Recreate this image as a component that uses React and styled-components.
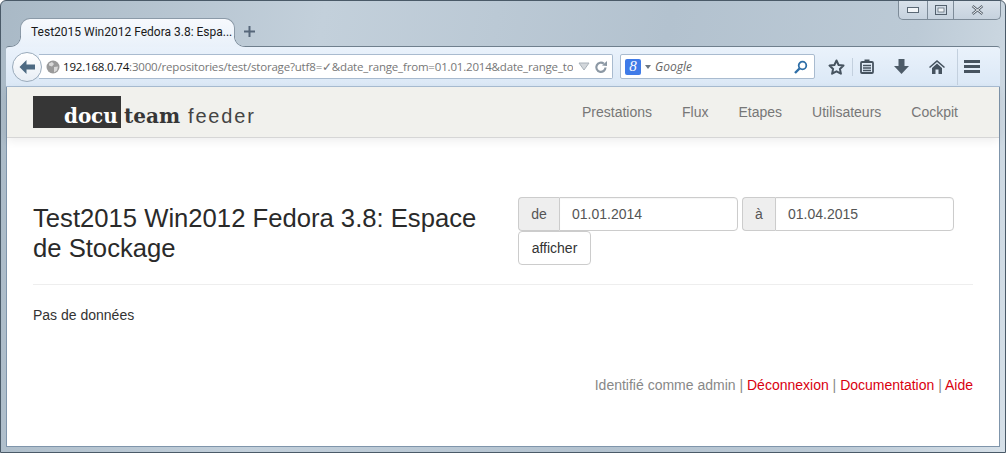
import React from "react";
import styled, { createGlobalStyle } from "styled-components";

const Global = createGlobalStyle`
  html, body { margin: 0; padding: 0; background: #fff; }
  body { font-family: "Liberation Sans", Arial, sans-serif; }
  * { box-sizing: border-box; }
`;

const Win = styled.div`
  position: relative;
  width: 1006px;
  height: 453px;
  overflow: hidden;
  padding: 1px 5px 5px 5px;
  display: flex;
  flex-direction: column;
  border: 1px solid #4a5a68;
  border-radius: 6px 6px 0 0;
  background: linear-gradient(100deg, #a9b9c6 0%, #c3d0db 30%, #b3c2cf 62%, #bccad6 85%, #d6e0e8 100%);
`;
const TabStrip = styled.div`
  height: 44px;
  display: flex;
  align-items: flex-end;
  padding-left: 14px;
  flex: none;
`;
const Tab = styled.div`
  position: relative;
  z-index: 1;
  width: 215px;
  height: 29px;
  margin-bottom: -1px;
  padding: 3px 0 0 10px;
  border: 1px solid #8b9aa8;
  border-bottom: none;
  border-radius: 10px 10px 0 0;
  background: linear-gradient(#f6f9fd, #e9f1fa);
  font: 12px/20px Roboto, sans-serif;
  color: #1a1a1a;
  white-space: nowrap;
  &::before,
  &::after {
    content: "";
    position: absolute;
    bottom: 0;
    width: 11px;
    height: 11px;
  }
  &::before {
    left: -11px;
    background: radial-gradient(circle at 0 0, transparent 10px, #7d8c9a 10.5px, #e9f1fa 11.5px);
  }
  &::after {
    right: -11px;
    background: radial-gradient(circle at 100% 0, transparent 10px, #7d8c9a 10.5px, #e9f1fa 11.5px);
  }
`;
const NewTab = styled.span`
  margin: 0 0 9px 9px;
  display: flex;
`;
const WinControls = styled.div`
  position: absolute;
  top: 0;
  right: 4px;
  width: 103px;
  height: 19px;
  display: grid;
  grid-template-columns: 28px 26px 1fr;
  border: 1px solid #7d8b98;
  border-top: none;
  border-radius: 0 0 5px 5px;
  background: linear-gradient(#d8e1ea, #c6d2de);
`;
const WinBtn = styled.div`
  display: flex;
  align-items: center;
  justify-content: center;
  border-left: ${(p) => (p.$first ? "none" : "1px solid #7d8b98")};
`;
const Toolbar = styled.div`
  height: 41px;
  flex: none;
  display: flex;
  align-items: center;
  padding: 0 0 0 6px;
  border-top: 1px solid #6f7f8d;
  border-radius: 3px 3px 0 0;
  background: linear-gradient(#eaf2fb, #dbe8f6);
  border-bottom: 1px solid #a9bdd3;
`;
const Back = styled.div`
  position: relative;
  z-index: 1;
  width: 30px;
  height: 30px;
  flex: none;
  border-radius: 50%;
  border: 1px solid #9aabbb;
  background: linear-gradient(#fff, #e8eef5);
  display: flex;
  align-items: center;
  justify-content: center;
`;
const UrlBar = styled.div`
  width: 574px;
  height: 25px;
  margin-left: -3px;
  padding: 0 4px 0 7px;
  display: flex;
  align-items: center;
  gap: 3px;
  border: 1px solid #a9bbcf;
  border-left: none;
  border-radius: 0 2px 2px 0;
  background: #fff;
`;
const UrlText = styled.div`
  flex: 1;
  min-width: 0;
  margin-right: 2px;
  overflow: hidden;
  white-space: nowrap;
  font: 11.5px/16px "Open Sans", sans-serif;
  letter-spacing: -0.18px;
  color: #777;
`;
const Host = styled.span`
  color: #111;
`;
const SearchBar = styled.div`
  width: 195px;
  height: 25px;
  margin-left: 7px;
  padding: 0 6px 0 4px;
  display: flex;
  align-items: center;
  border: 1px solid #a9bbcf;
  border-radius: 2px;
  background: #fff;
`;
const GBadge = styled.div`
  width: 16px;
  height: 16px;
  flex: none;
  border-radius: 2px;
  background: #3f7be8;
  color: #fff;
  font: italic 15px/15px "Liberation Serif", serif;
  text-align: center;
`;
const SearchText = styled.div`
  flex: 1;
  margin-left: 4px;
  font: italic 12px/16px "Open Sans", sans-serif;
  color: #666;
`;
const Tools = styled.div`
  display: flex;
  align-items: center;
  margin-left: 6px;
  flex: 1;
`;
const ToolIcon = styled.span`
  display: flex;
  width: ${(p) => p.$w}px;
  justify-content: center;
`;
const ToolSep = styled.span`
  width: 1px;
  height: ${(p) => p.$h}px;
  margin-left: ${(p) => p.$ml || 0}px;
  background: #c3d0de;
  flex: none;
`;
const Page = styled.div`
  flex: 1;
  min-height: 0;
  background: #fff;
  border: 1px solid #7f95ab;
  border-top: none;
`;
const NavBar = styled.div`
  height: 51px;
  padding: 0 41px 0 26px;
  display: flex;
  align-items: center;
  justify-content: space-between;
  background: #f1f1ed;
  border-bottom: 1px solid #d6d6d6;
  box-shadow: 0 3px 9px rgba(0, 0, 0, 0.07);
`;
const Logo = styled.div`
  display: flex;
  align-items: flex-start;
  height: 32px;
`;
const LogoBox = styled.div`
  width: 88px;
  height: 32px;
  padding: 6px 0 0 31px;
  background: #363636;
  color: #fff;
  font: bold 20px/28px "DejaVu Serif", serif;
  letter-spacing: -0.1px;
`;
const LogoTeam = styled.span`
  margin: 6px 0 0 3px;
  color: #363636;
  font: bold 20px/28px "DejaVu Serif", serif;
  letter-spacing: 0;
`;
const LogoFeeder = styled.span`
  margin: 6px 0 0 8px;
  color: #444;
  font: 20px/28px "Liberation Sans", sans-serif;
  letter-spacing: 1.8px;
`;
const Nav = styled.nav`
  display: flex;
  gap: 30px;
`;
const NavLink = styled.a`
  font-size: 14px;
  line-height: 20px;
  color: #777;
`;
const Main = styled.main`
  padding: 59px 26px 0;
`;
const Head = styled.div`
  display: grid;
  grid-template-columns: 485px 1fr;
  min-height: 87px;
  border-bottom: 1px solid #eee;
`;
const Title = styled.h1`
  margin: 6px 0 0;
  max-width: 455px;
  font-size: 25.65px;
  font-weight: 400;
  line-height: 30px;
  color: #2a2a2a;
`;
const Form = styled.form`
  display: flex;
  flex-wrap: wrap;
  width: 440px;
  column-gap: 4px;
  margin: 0;
  height: 87px;
  align-content: flex-start;
`;
const Group = styled.div`
  display: flex;
  width: ${(p) => p.$w}px;
  height: 34px;
  font-size: 14px;
`;
const Addon = styled.span`
  width: ${(p) => p.$w}px;
  flex: none;
  display: flex;
  align-items: center;
  justify-content: center;
  background: #eee;
  border: 1px solid #ccc;
  border-right: none;
  border-radius: 4px 0 0 4px;
  color: #555;
`;
const Field = styled.div`
  flex: 1;
  padding: 0 12px;
  display: flex;
  align-items: center;
  background: #fff;
  border: 1px solid #ccc;
  border-radius: 0 4px 4px 0;
  color: #555;
  box-shadow: inset 0 1px 1px rgba(0, 0, 0, 0.04);
`;
const Btn = styled.button`
  width: 73px;
  height: 34px;
  padding: 0;
  background: #fff;
  border: 1px solid #ccc;
  border-radius: 4px;
  font: 14px "Liberation Sans", sans-serif;
  color: #333;
`;
const Body = styled.p`
  margin: 20px 0 0;
  font-size: 14px;
  line-height: 20px;
  color: #333;
`;
const Footer = styled.div`
  margin-top: 50px;
  text-align: right;
  font-size: 14px;
  line-height: 20px;
  color: #888;
`;
const Red = styled.a`
  color: #d9000f;
`;
const InlineIcon = styled.svg`
  flex: none;
  margin-left: ${(p) => p.$ml || 0}px;
`;

export default function App() {
  return (
    <>
      <Global />
      <Win>
        <TabStrip>
          <Tab>Test2015 Win2012 Fedora 3.8: Espa...</Tab>
          <NewTab>
            <svg width="11" height="11" viewBox="0 0 11 11"><path d="M5.5 0v11M0 5.5h11" stroke="#56677a" strokeWidth="2" /></svg>
          </NewTab>
        </TabStrip>
        <WinControls>
          <WinBtn $first>
            <svg width="12" height="7" viewBox="0 0 12 7"><rect x=".5" y=".5" width="11" height="5" fill="#f2f5f8" stroke="#5a6875" /></svg>
          </WinBtn>
          <WinBtn>
            <svg width="12" height="10" viewBox="0 0 12 10"><rect x=".5" y=".5" width="11" height="9" fill="none" stroke="#53616e" /><rect x="3" y="3" width="6" height="4" fill="#f2f5f8" stroke="#53616e" strokeWidth=".7" /></svg>
          </WinBtn>
          <WinBtn>
            <svg width="13" height="10" viewBox="0 0 13 10"><path d="M1.5 1 11.5 9M11.5 1 1.5 9" stroke="#59646f" strokeWidth="2.6" /><path d="M1.5 1 11.5 9M11.5 1 1.5 9" stroke="#f2f5f8" strokeWidth="1" /></svg>
          </WinBtn>
        </WinControls>
        <Toolbar>
          <Back>
            <svg width="18" height="16" viewBox="0 0 18 16"><path d="M8.5 1 1.5 8l7 7V10.500H17v-5H8.500z" fill="#4d6a82" /></svg>
          </Back>
          <UrlBar>
            <InlineIcon width="14" height="14" viewBox="0 0 14 14">
              <circle cx="7" cy="7" r="6.500" fill="#9a9a9a" />
              <path d="M3 3.500 6 2l2 2-2 2.500-3-1zM8 7l4-.5-1 4-3 2z" fill="#d8d8d8" />
            </InlineIcon>
            <UrlText><Host>192.168.0.74</Host>:3000/repositories/test/storage?utf8=✓&amp;date_range_from=01.01.2014&amp;date_range_to</UrlText>
            <InlineIcon width="12" height="9" viewBox="0 0 12 9"><path d="M1 1h10L6 8z" fill="#d3d7db" stroke="#aab2ba" /></InlineIcon>
            <InlineIcon $ml={1} width="14" height="14" viewBox="0 0 14 14">
              <path d="M11.500 7.500A4.600 4.600 0 1 1 9.800 3.700" fill="none" stroke="#8c98a4" strokeWidth="2.200" />
              <path d="M8 5.500 13 6V1z" fill="#8c98a4" />
            </InlineIcon>
          </UrlBar>
          <SearchBar>
            <GBadge>8</GBadge>
            <InlineIcon $ml={4} width="6" height="4" viewBox="0 0 6 4"><path d="M0 0h6L3 4z" fill="#6c7782" /></InlineIcon>
            <SearchText>Google</SearchText>
            <svg width="14" height="14" viewBox="0 0 14 14"><circle cx="8.500" cy="5.500" r="3.800" fill="none" stroke="#2f6fa8" strokeWidth="1.800" /><path d="M5.500 8.500 1 13" stroke="#2f6fa8" strokeWidth="2.400" /></svg>
          </SearchBar>
          <Tools>
            <ToolIcon $w={31}>
              <svg width="17" height="16" viewBox="0 0 17 16"><path d="M8.500 1.500 10.600 6l4.900.6-3.600 3.300 1 4.800-4.400-2.400-4.400 2.400 1-4.800L1.500 6.600 6.400 6z" fill="none" stroke="#46535f" strokeWidth="2" strokeLinejoin="round" /></svg>
            </ToolIcon>
            <ToolSep $h={18} />
            <ToolIcon $w={27}>
              <svg width="14" height="15" viewBox="0 0 14 15"><rect x="1" y="3" width="12" height="11" rx="1" fill="none" stroke="#46535f" strokeWidth="1.800" /><rect x="4.500" y="0.500" width="5" height="3" fill="#46535f" /><path d="M3 6.500h8M3 9h8M3 11.500h8" stroke="#46535f" strokeWidth="1.300" /></svg>
            </ToolIcon>
            <ToolIcon $w={42}>
              <svg width="15" height="15" viewBox="0 0 15 15"><path d="M4.500 0h6v7H15l-7.500 8L0 7h4.500z" fill="#4d5b68" /></svg>
            </ToolIcon>
            <ToolIcon $w={30}>
              <svg width="16" height="14" viewBox="0 0 16 14"><path d="M8 0 16 7l-1 1-7-6-7 6-1-1z" fill="#46535f" /><path d="M3 8 8 3.500 13 8v6H9.500V9.500h-3V14H3z" fill="#46535f" /></svg>
            </ToolIcon>
            <ToolSep $h={36} $ml={5} />
            <ToolIcon $w={28}>
              <svg width="16" height="13" viewBox="0 0 16 13"><path d="M0 1.500h16M0 6.500h16M0 11.500h16" stroke="#46535f" strokeWidth="2.800" /></svg>
            </ToolIcon>
          </Tools>
        </Toolbar>
        <Page>
          <NavBar>
            <Logo>
              <LogoBox>docu</LogoBox>
              <LogoTeam>team</LogoTeam>
              <LogoFeeder>feeder</LogoFeeder>
            </Logo>
            <Nav>
              <NavLink>Prestations</NavLink>
              <NavLink>Flux</NavLink>
              <NavLink>Etapes</NavLink>
              <NavLink>Utilisateurs</NavLink>
              <NavLink>Cockpit</NavLink>
            </Nav>
          </NavBar>
          <Main>
            <Head>
              <Title>Test2015 Win2012 Fedora 3.8: Espace de Stockage</Title>
              <Form>
                <Group $w={220}><Addon $w={41}>de</Addon><Field>01.01.2014</Field></Group>
                <Group $w={212}><Addon $w={33}>à</Addon><Field>01.04.2015</Field></Group>
                <Btn type="button">afficher</Btn>
              </Form>
            </Head>
            <Body>Pas de données</Body>
            <Footer>
              Identifié comme admin | <Red>Déconnexion</Red> | <Red>Documentation</Red> | <Red>Aide</Red>
            </Footer>
          </Main>
        </Page>
      </Win>
    </>
  );
}
